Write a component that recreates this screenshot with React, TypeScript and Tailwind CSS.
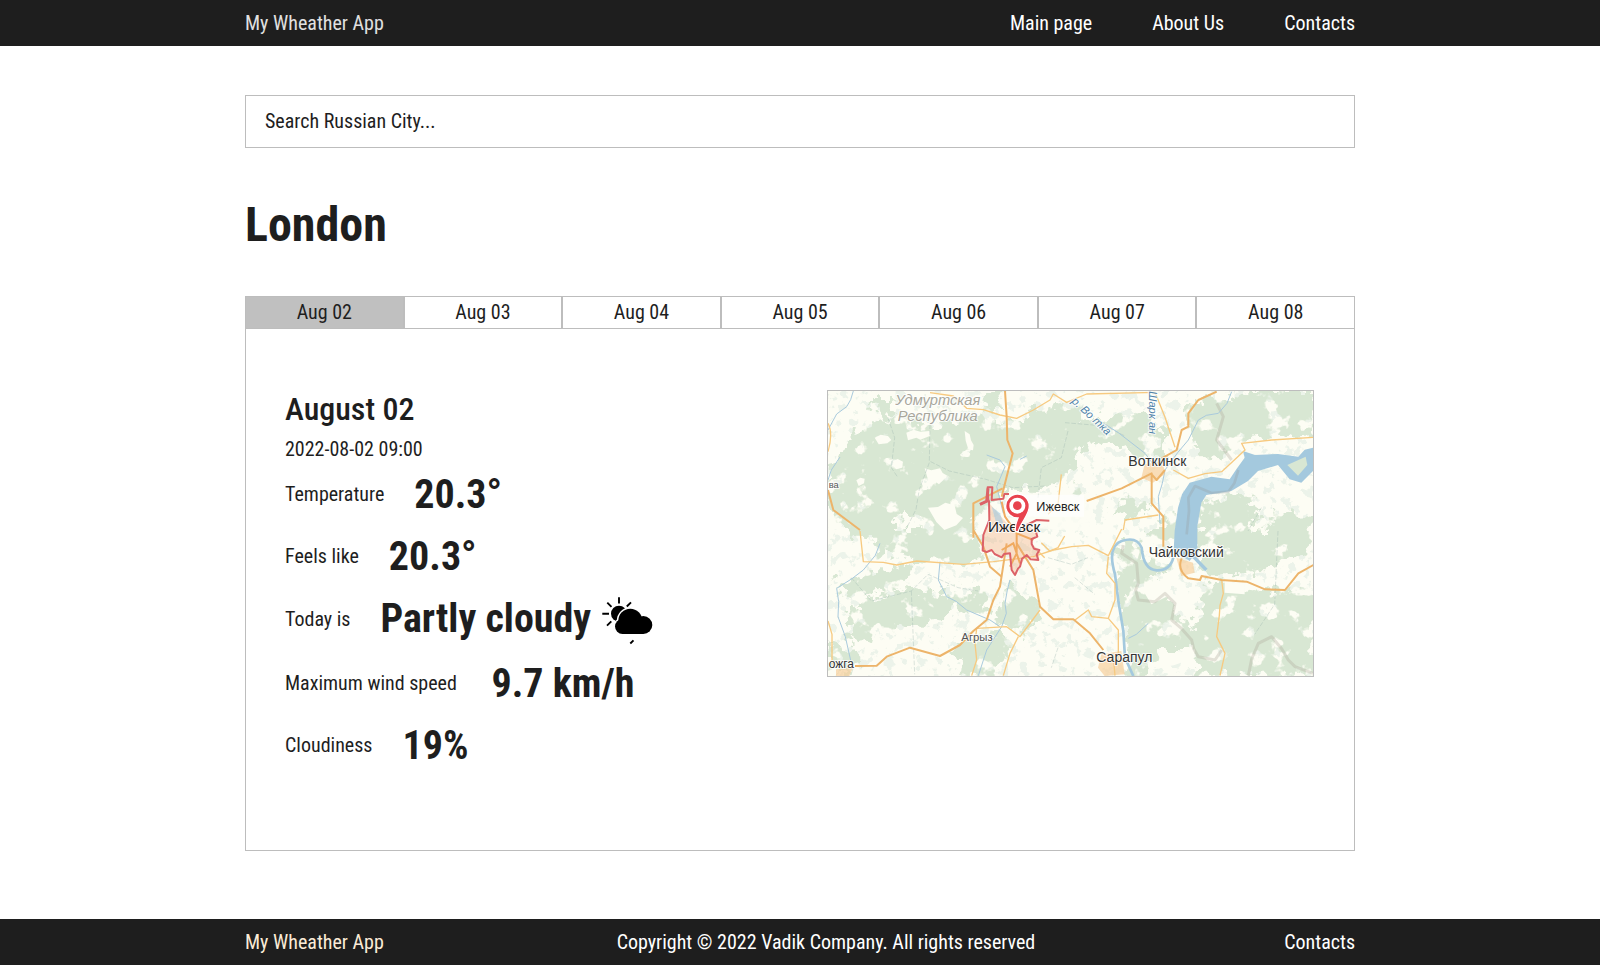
import React, { useState } from "react";
import type { ReactNode } from "react";

const days = ["02", "03", "04", "05", "06", "07", "08"];

function PartlyCloudyIcon() {
  return (
    <svg viewBox="0 0 54 54" className="-mt-px -mb-[3px] h-[54px] w-[54px]" aria-hidden="true">
      <path
        d="M19 3.300v6.200M7.300 8.700l4.200 4.200M31 8.300l-4.200 4.200M2.300 19.700H9M7 31.700l4.300-4.400M30.300 49.500l3.200-3.200"
        stroke="#000"
        strokeWidth="1.900"
      />
      <circle cx="19" cy="19.700" r="8" />
      <g stroke="#fff" strokeWidth="3">
        <circle cx="22.500" cy="32.500" r="7.500" />
        <circle cx="30.300" cy="26.700" r="12" />
        <circle cx="43.300" cy="31" r="9" />
      </g>
      <circle cx="22.500" cy="32.500" r="7.500" />
      <circle cx="30.300" cy="26.700" r="12" />
      <circle cx="43.300" cy="31" r="9" />
      <path d="M22.500 28H43.300V40H22.500Z" />
    </svg>
  );
}

function RegionMap() {
  return (
    <svg
      viewBox="0 0 1455 855"
      role="img"
      aria-label="Map of the Izhevsk region"
      className="block h-auto w-full"
      fontFamily="'Liberation Sans', sans-serif"
    >
      <defs>
        <filter id="forest" x="0" y="0" width="100%" height="100%" filterUnits="objectBoundingBox">
          <feTurbulence type="fractalNoise" baseFrequency="0.03" numOctaves="3" seed="4" result="edge" />
          <feDisplacementMap in="SourceGraphic" in2="edge" scale="75" xChannelSelector="R" yChannelSelector="G" result="ragged" />
          <feTurbulence type="fractalNoise" baseFrequency="0.016" numOctaves="4" seed="11" result="noise" />
          <feColorMatrix in="noise" type="matrix" values="0 0 0 0 0  0 0 0 0 0  0 0 0 0 0  14 0 0 0 -8.500" result="holes" />
          <feComposite in="ragged" in2="holes" operator="out" />
        </filter>
        <filter id="scrub" x="0" y="0" width="100%" height="100%">
          <feTurbulence type="fractalNoise" baseFrequency="0.035" numOctaves="4" seed="23" result="noise" />
          <feColorMatrix in="noise" type="matrix" values="0 0 0 0 0.840  0 0 0 0 0.900  0 0 0 0 0.820  0 14 0 0 -8" />
        </filter>
      </defs>

      <rect width="1455" height="855" fill="#fdfdf4" />
      <rect width="1455" height="855" filter="url(#scrub)" />

      <g filter="url(#forest)" fill="#d8e7d3">
        <rect width="1455" height="855" fill="none" />
        <g transform="translate(-24 -33)">
          <path d="M24 320L30 260 90 180 130 140 230 110 330 140 480 110 560 120 700 80 780 60 790 200 745 320 620 330 560 330 480 400 440 470 330 450 250 390 210 470 90 470 24 380Z" />
          <path d="M150 60l60 0 20 40-50 20zM480 50l60-10 10 50-60 0z" />
        </g>
        <g transform="translate(711 -33)">
          <path d="M0 120L230 100 300 160 300 240 210 230 130 180 0 210Z" />
          <path d="M360 90L420 50 470 60 560 33 745 33 745 165 560 180 500 210 430 240 380 190Z" />
          <path d="M0 290l40 10 0 50-40 0zM130 390l60-30 60 10-50 40zM290 410l50-30 0 80-50 0zM410 370L520 340 590 380 540 460 400 460ZM660 240l60-10-20 50zM620 400l120 10 0 60-120 0z" />
        </g>
        <g transform="translate(-24 417)">
          <path d="M150 0L450 0 500 85 430 100 300 90 180 70ZM30 170L270 100 250 170 110 200ZM80 250L160 200 290 170 400 200 370 270 230 300 90 340ZM370 170L490 185 510 260 420 240ZM550 160L670 230 620 310 530 280ZM24 330l60 20 40 60-100 30zM400 350l140-50 30 60-50 80-80 0z" />
        </g>
        <g transform="translate(711 417)">
          <path d="M160 40L210 40 240 90 320 110 270 140 220 190 310 190 330 250 400 330 400 360 290 360 230 437 190 437 190 330 165 230Z" />
          <path d="M390 0L640 0 745 20 745 60 560 130 420 130ZM410 150L480 160 600 185 745 170 745 437 400 437 370 320 410 240ZM240 0l90 0-10 70-70-20z" />
        </g>
      </g>

      <g fill="#fdfdf4">
        <path d="M140 140l18-9 22 4 10 12-12 10-26 3zM235 125l22-9 20 6 28-2 2 14-30 12-12-6-25 8zM410 120l15 10 4 18 8 14-2 16-14-3-8-26zM195 210l14-6 16 8-3 18-18 5-7-12zM85 268l12-8 13 3-2 14-16 8zM290 232l20 6 26-6 8 14 14 8-25 26-14-10-16 6zM300 350l30-2 22-13 28 8 6 26 19 12-20 22-36 14-24-24z" />
        <path d="M570 305L725 305 800 330 780 420 590 410Z" opacity="0.800" />
        <path d="M940 590l60-20 20 45-50 25zM1040 600l40 0 10 35 20 35-40 4-20-32zM1000 790l52-4 48-11 0 25-60 22-60 13zM1190 570l60 10 0 30-60-5zM1340 560l60 15-40 30z" />
      </g>

      <g fill="none" stroke="#a8a294" strokeOpacity="0.300" strokeWidth="9" strokeLinejoin="round">
        <path d="M886 462l-5 25 45 30 5 60-8 20 8 30 50 5 30-25 30 30-10 50 30 26 30 34 6 26 14 24 50 10 20-30M1261 854l10-50 20-47 40-20 30 36 20 34 20 20 54 20" />
        <path d="M1166 37l20 40-20 70 45 60" />
      </g>

      <g fill="none" stroke="#9bb5b0" strokeOpacity="0.550" strokeWidth="2">
        <path d="M306 100l-2 110 60 30 110 25 80 25 100-5M304 215l-30 80-10 60-30 60M711 95l120 10 60 30M180 80l20 60-10 90 20 30M720 120l-20 80-60 30-10 90M70 560l60 70 120-30 50-50 90 40 60 10M250 600l10 250M690 770l-20 60M1300 350l-40 70M1350 420l-10 220-60 90M660 500l70 20 50-20M740 560l60 50" strokeDasharray="14 5" />
      </g>

      <g fill="none" stroke="#a9cadd" strokeWidth="3" strokeLinejoin="round">
        <path d="M76 0l-8 26-12 21-30 22-26 48M0 267l10-30 26-39M476 192l40 15 15 20-25 60 20 80M576 205l20-10M156 457l-14 36-36 44-34 26-46 29 6 40-2 45 22 60 18 80M336 512l-5 55 25 50 28 14 32 26 70 30 30 20M546 567l-8 30-7 40 4 30-14 40-45 70-25 77M811 87l60 38 80 62 30 40M901 742l24-12 36-33M1211 2l-14 35-26 30-36 6-24 14-30 60-32 38-38 52-8 40-12 40 5 80" />
      </g>

      <path
        fill="#a4c9de"
        d="M1455 170L1430 176 1411 197 1350 189 1281 192 1245 180 1250 200 1225 235 1205 265 1150 257 1085 275 1062 310 1050 350 1040 420 1037 480 1085 510 1108 477 1108 405 1120 335 1135 312 1210 300 1260 270 1290 240 1350 222 1385 265 1420 275 1455 240Z"
      />
      <path fill="#d8e7d3" d="M1378 222l55-25 5 25-28 32z" />
      <path
        fill="none"
        stroke="#9aa8ad"
        strokeOpacity="0.400"
        strokeWidth="8"
        strokeLinejoin="round"
        d="M1231 237l-12 40-18 25-50 4-50-21-20 35 2 40-7 70"
      />
      <path fill="none" stroke="#a4c9de" strokeWidth="8" d="M1036 500q-10 40-50 38t-45-68q-15-35-60-20t-20 100l10 80 15 90 5 80 25 55" />
      <path fill="none" stroke="#a4c9de" strokeWidth="10" d="M1090 490l45 47" />

      <g fill="#f7cf9c" fillOpacity="0.700">
        <path d="M950 220l55-10 5 40-35 25-35-15zM1045 500l50 15 5 30-40 10zM820 790l60-10 10 70-60 5-20-25zM24 835l50-5-10 25-40 0z" />
      </g>

      <g fill="none" stroke="#f7ca80" strokeWidth="4" strokeLinejoin="round">
        <path d="M306 5l70 10 40 37 50 4 50 16 50 10 50-25 50-30 10-18 40 25 60-25 205-5 30 75 30 90" />
        <path d="M0 97q16 30 0 85M96 420l10 92 60 2 40 8 60-12 140 10 90-8 120-15 60-20 55-10 50-4 60 31 40-80" />
        <path d="M446 712l90-5 40 30 60-80M571 737l-25 50-20 67M446 712l-5 45 5 50-15 47M0 690l12 40 0 90" />
        <path d="M1036 237l45 25 50-14 50-6 34-31 36-34-10-20 90-10 124-8M886 417l5-30 100-15" />
        <path d="M841 497l-5 50 25 30 0 50-20 55 30 35 0 70M741 687l40-30 10 20 50 5M1181 567l5 40-10 36-2 30-8 64 25 50-15 67M856 797l5 57" />
        <path d="M640 455l25 25 25-10 20-35M650 500l-20-20M660 370l30-30 10-90" />
      </g>
      <g fill="none" stroke="#edb46a" strokeWidth="6" strokeLinejoin="round">
        <path d="M531 0l5 77 2 70 16 40-18 70-15 60" />
        <path d="M0 297l16 60 80 60M436 440V337l88-45M436 417l30 50 20 60 35 30" />
        <path d="M81 825l65-1 30-27 70-27 90 25 60-33 40-42 40-33 20-60 20-40 20-130M566 457l50 80 20 110 40 38 60 0 50 42 40 50" />
        <path d="M1166 2l-55 25-30 40 0 40-20 10-15 60-45 25M776 330l105-38 90-45 0 90 35 40 0 90M971 250l15 17 25-30M1061 502q-15 35 20 60l35 5 5-12 60 12 75 5 55 23 60 2 40-50 45-25" />
      </g>

      <g transform="translate(396 237)">
        <path
          d="M88 100L88 150 70 195 68 242 95 240 125 262 150 250 155 300 165 315 180 290 200 255 235 270 238 240 215 222 215 207 232 200 228 185 205 165 150 170Z"
          fill="#f2a36f"
          fillOpacity="0.320"
        />
        <path d="M95 110l25 20 10 30-20 5z" fill="#a4cbe2" fillOpacity="0.600" />
        <g fill="none" stroke="#f0aa60" strokeWidth="6">
          <path d="M125 95l10 45 35 50 0 60-20 40M170 190l50 20M125 240l35-20 20 60" />
        </g>
        <path
          d="M60 103L85 92 83 52 97 52 95 90 130 86 133 72 147 72M87 92L88 150 70 195 68 242 80 246 95 240 104 252 125 262 132 252 150 250 155 300 165 315 174 296 180 290 186 266 200 255 212 268 235 270 230 254 238 240 222 236 215 222 215 207 232 200 228 185M200 165l30-15 38 2"
          fill="none"
          stroke="#dc6268"
          strokeWidth="6"
          strokeLinejoin="round"
        />
        <path d="M60 103l28-13M80 95l4-40" stroke="#dc6268" strokeWidth="9" />
      </g>

      <g stroke="#fff" strokeWidth="6" strokeOpacity="0.800" strokeLinejoin="round" paintOrder="stroke" fill="#333">
        <g fontStyle="italic" fill="#a8a79c" fontSize="44">
          <text x="202" y="42">Удмуртская</text>
          <text x="209" y="90">Республика</text>
        </g>
        <text x="901" y="225" fontSize="42">Воткинск</text>
        <text x="962" y="497" fontSize="42">Чайковский</text>
        <text x="805" y="812" fontSize="42">Сарапул</text>
        <text x="400" y="750" fontSize="34" fill="#555">Агрыз</text>
        <text x="2" y="830" fontSize="36">ожга</text>
        <text x="2" y="292" fontSize="28" fill="#555">ва</text>
        <g fontStyle="italic" fill="#4f82a8" fontSize="33">
          <text transform="translate(729 33) rotate(43)">р. Во тка</text>
          <text transform="translate(964 1) rotate(90)">Шарк ан</text>
        </g>
        <text x="480" y="422" fontSize="46" fill="#222">Ижевск</text>
      </g>

      <g transform="translate(396 237)">
        <path d="M172 74h200v66H205z" fill="#fff" fillOpacity="0.650" />
        <path d="M172 72a36 36 0 0 1 36 36c0 28-26 48-34 78l-8-2c-2-18 3-28 8-40a36 36 0 0 1-2-72Z" fill="#e8434e" stroke="#fff" strokeWidth="4" />
        <circle cx="172" cy="107" r="24" fill="#fff" />
        <circle cx="172" cy="107" r="13" fill="#e8434e" />
        <text x="229" y="122" fontSize="38" fill="#222">Ижевск</text>
      </g>
    </svg>
  );
}

function Reading({ label, children }: { label: ReactNode; children: ReactNode }) {
  return (
    <div className="flex items-center gap-[30px]">
      <dt className="pb-0.5 leading-6 whitespace-pre">{label}</dt>
      <dd className="flex items-start gap-[9px] text-[40px] leading-[47px] font-bold">{children}</dd>
    </div>
  );
}

export default function App() {
  const [active, setActive] = useState("02");
  return (
    <div className="flex min-h-screen flex-col bg-white font-['Roboto_Condensed',Roboto,sans-serif] text-xl text-[#1e1e1e]">
      <header className="bg-[#1e1e1e] py-2">
        <div className="mx-auto flex max-w-[1110px] items-center justify-between leading-[30px]">
          <a href="#home" className="text-[#e0e0e0]">My Wheather App</a>
          <nav className="flex gap-[60px] text-white">
            <a href="#main">Main page</a>
            <a href="#about">About Us</a>
            <a href="#contacts">Contacts</a>
          </nav>
        </div>
      </header>

      <main className="mx-auto w-full max-w-[1110px] flex-1 pt-[49px] pb-[68px]">
        <input
          type="text"
          aria-label="Search Russian City"
          placeholder="Search Russian City..."
          className="block h-[53px] w-full border border-[#bdbdbd] px-[19px] pb-0.5 placeholder:text-[#1e1e1e]"
        />
        <h1 className="mt-[49px] text-5xl leading-[56px] font-bold">London</h1>

        <div role="tablist" aria-label="Forecast day" className="mt-[43px] flex">
          {days.map((day) => (
            <button
              key={day}
              type="button"
              role="tab"
              aria-selected={active === day}
              onClick={() => setActive(day)}
              className={`h-[33px] flex-1 border border-[#bdbdbd] leading-[31px] ${active === day ? "bg-[#c0c0c0]" : "bg-white"}`}
            >
              Aug {day}
            </button>
          ))}
        </div>

        <section
          role="tabpanel"
          aria-label={`August ${active}`}
          className="flex min-h-[522px] items-start justify-between border border-t-0 border-[#bdbdbd] py-[61px] pr-10 pl-[39px]"
        >
          <div>
            <h2 className="text-[32px] leading-[38px] font-medium">August {active}</h2>
            <p className="mt-[9px] leading-6">2022-08-{active} 09:00</p>
            <dl className="mt-2.5 flex flex-col gap-[15px]">
              <Reading label="Temperature">20.3°</Reading>
              <Reading label="Feels like">20.3°</Reading>
              <Reading label="Today is">
                Partly cloudy
                <PartlyCloudyIcon />
              </Reading>
              <Reading label="Maximum wind speed ">9.7 km/h</Reading>
              <Reading label="Cloudiness">19%</Reading>
            </dl>
          </div>
          <div className="w-[487px] shrink-0 border border-[#bdbdbd]">
            <RegionMap />
          </div>
        </section>
      </main>

      <footer className="bg-[#1e1e1e] py-2">
        <div className="mx-auto flex max-w-[1110px] items-center justify-between leading-[30px]">
          <a href="#home" className="text-[#faebd7]">My Wheather App</a>
          <p className="pr-4 text-white">Copyright © 2022 Vadik Company. All rights reserved</p>
          <a href="#contacts" className="text-white">Contacts</a>
        </div>
      </footer>
    </div>
  );
}
